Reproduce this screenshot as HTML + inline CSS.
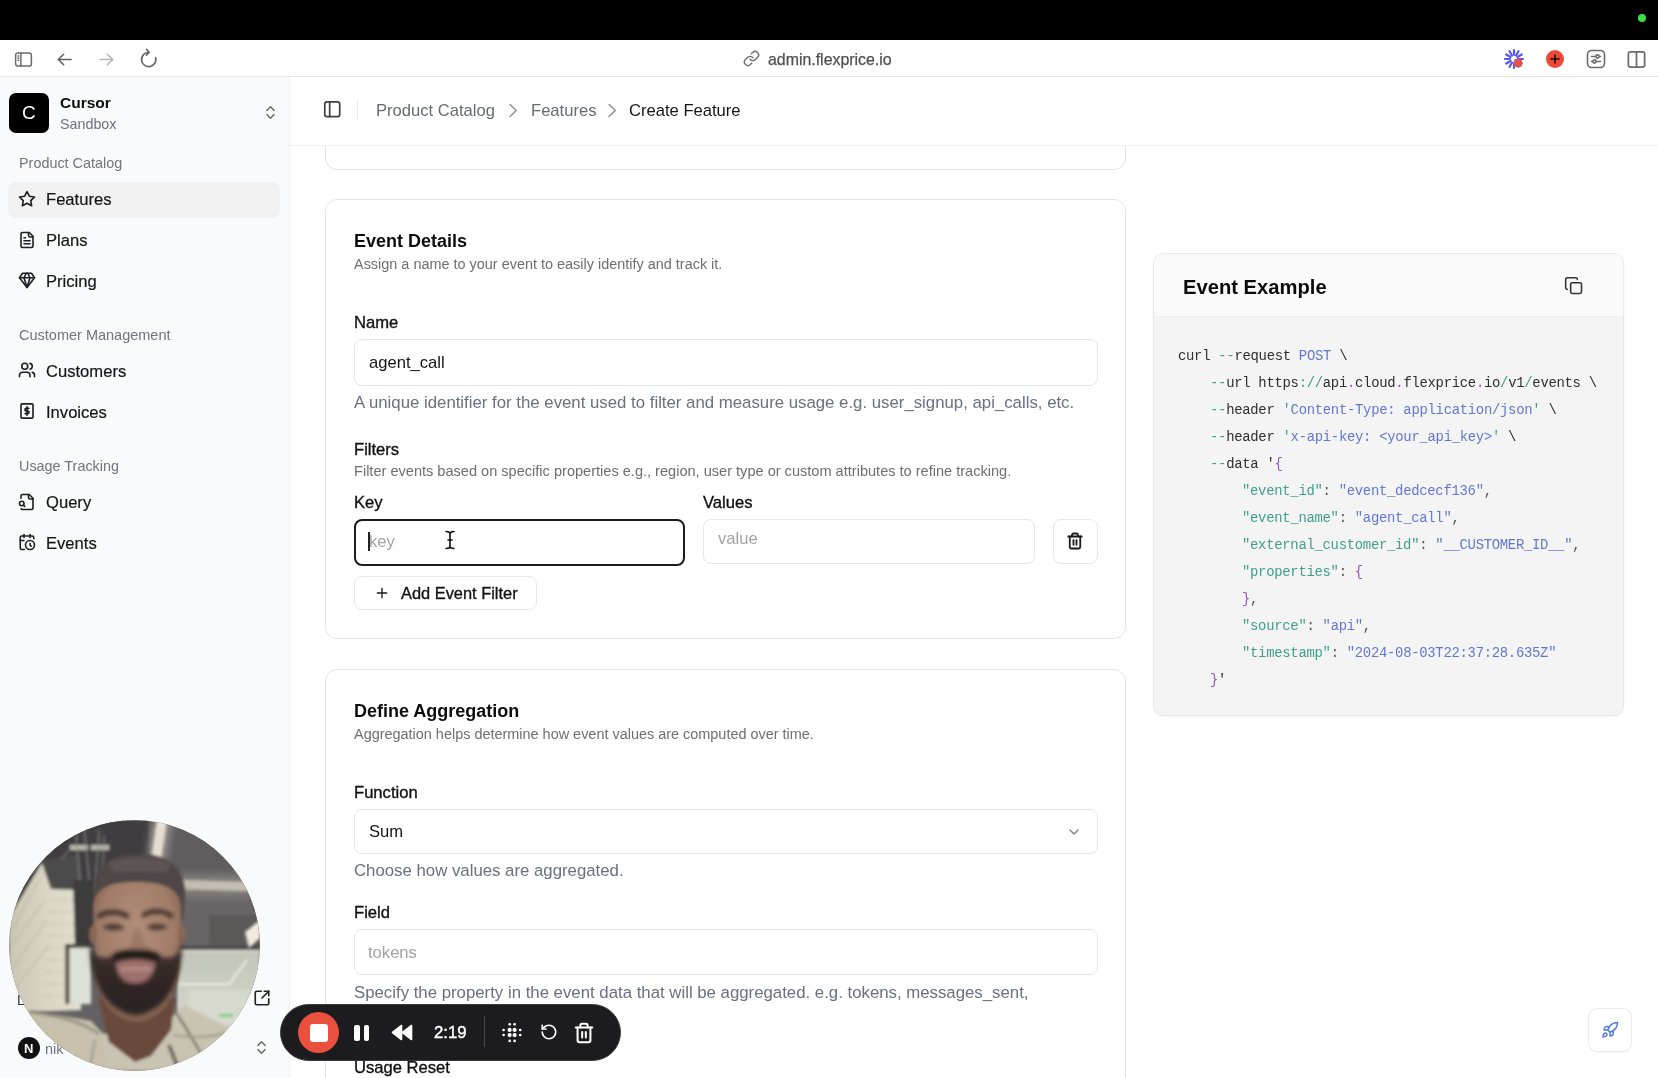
<!DOCTYPE html>
<html><head><meta charset="utf-8">
<style>
*{margin:0;padding:0;box-sizing:border-box}
html,body{width:1658px;height:1078px;overflow:hidden;background:#fff;font-family:"Liberation Sans",sans-serif;color:#111}
.a{position:absolute}
.t{position:absolute;white-space:nowrap;line-height:1;will-change:transform}
svg{position:absolute;overflow:visible}
</style></head><body>
<div class="a" style="left:325px;top:60px;width:801px;height:110px;border:1px solid #e4e4e7;border-radius:12px;background:#fff"></div>
<div class="a" style="left:325px;top:199px;width:801px;height:440px;border:1px solid #e4e4e7;border-radius:12px;background:#fff"></div>
<div class="t" style="left:354.00px;top:231.66px;font-size:18px;color:#0d0d0d;font-weight:700;font-family:'Liberation Sans',sans-serif;">Event Details</div>
<div class="t" style="left:354.00px;top:256.97px;font-size:14.45px;color:#6f6f6f;font-weight:400;font-family:'Liberation Sans',sans-serif;">Assign a name to your event to easily identify and track it.</div>
<div class="t" style="left:354.00px;top:315.05px;font-size:16.6px;color:#111;font-weight:400;font-family:'Liberation Sans',sans-serif;-webkit-text-stroke:0.35px currentColor;">Name</div>
<div class="a" style="left:354px;top:339px;width:744px;height:47px;border:1px solid #e6e7ea;border-radius:8px;background:#fff"></div>
<div class="t" style="left:368.50px;top:355.15px;font-size:16.6px;color:#151515;font-weight:400;font-family:'Liberation Sans',sans-serif;">agent_call</div>
<div class="t" style="left:354.00px;top:394.98px;font-size:16.8px;color:#687081;font-weight:400;font-family:'Liberation Sans',sans-serif;">A unique identifier for the event used to filter and measure usage e.g. user_signup, api_calls, etc.</div>
<div class="t" style="left:354.00px;top:442.15px;font-size:16.6px;color:#111;font-weight:400;font-family:'Liberation Sans',sans-serif;-webkit-text-stroke:0.35px currentColor;">Filters</div>
<div class="t" style="left:354.00px;top:464.17px;font-size:14.57px;color:#6f6f6f;font-weight:400;font-family:'Liberation Sans',sans-serif;">Filter events based on specific properties e.g., region, user type or custom attributes to refine tracking.</div>
<div class="t" style="left:354.00px;top:494.95px;font-size:16.6px;color:#111;font-weight:400;font-family:'Liberation Sans',sans-serif;-webkit-text-stroke:0.35px currentColor;">Key</div>
<div class="t" style="left:703.00px;top:494.95px;font-size:16.6px;color:#111;font-weight:400;font-family:'Liberation Sans',sans-serif;-webkit-text-stroke:0.35px currentColor;">Values</div>
<div class="a" style="left:354px;top:519px;width:331px;height:47px;border:2px solid #1c1c1c;border-radius:8px;background:#fff"></div>
<div class="t" style="left:369.00px;top:533.75px;font-size:16.6px;color:#a3a3a3;font-weight:400;font-family:'Liberation Sans',sans-serif;">key</div>
<div class="a" style="left:368px;top:532px;width:1.5px;height:19px;background:#222"></div>
<div class="a" style="left:703px;top:519px;width:332px;height:45px;border:1px solid #e6e7ea;border-radius:8px;background:#fff"></div>
<div class="t" style="left:718.00px;top:530.95px;font-size:16.6px;color:#a3a3a3;font-weight:400;font-family:'Liberation Sans',sans-serif;">value</div>
<div class="a" style="left:1053px;top:519px;width:45px;height:45px;border:1px solid #e6e7ea;border-radius:8px;background:#fff"></div>
<svg style="left:1066px;top:532px" width="18" height="18" viewBox="0 0 24 24" fill="none" stroke="#1a1a1a" stroke-width="2.4" stroke-linecap="round" stroke-linejoin="round" ><path d="M3 6h18"/><path d="M19 6v14c0 1-1 2-2 2H7c-1 0-2-1-2-2V6"/><path d="M8 6V4c0-1 1-2 2-2h4c1 0 2 1 2 2v2"/><line x1="10" x2="10" y1="11" y2="17"/><line x1="14" x2="14" y1="11" y2="17"/></svg>
<svg style="left:444px;top:530px" width="12" height="20" viewBox="0 0 12 20" fill="none" stroke="#111" stroke-width="1.6" stroke-linecap="round"><path d="M2 1.5c2 0 4 .5 4 2.5v12c0 2 2 2.5 4 2.5M10 1.5c-2 0-4 .5-4 2.5v12c0 2-2 2.5-4 2.5M4 10h4"/></svg>
<div class="a" style="left:354px;top:576px;width:183px;height:34px;border:1px solid #e6e7ea;border-radius:8px;background:#fff"></div>
<svg style="left:374px;top:585px" width="16" height="16" viewBox="0 0 24 24" fill="none" stroke="#1a1a1a" stroke-width="2" stroke-linecap="round" stroke-linejoin="round" ><path d="M5 12h14"/><path d="M12 5v14"/></svg>
<div class="t" style="left:400.60px;top:584.82px;font-size:16.4px;color:#151515;font-weight:400;font-family:'Liberation Sans',sans-serif;-webkit-text-stroke:0.35px currentColor;">Add Event Filter</div>
<div class="a" style="left:325px;top:669px;width:801px;height:480px;border:1px solid #e4e4e7;border-radius:12px;background:#fff"></div>
<div class="t" style="left:354.00px;top:701.66px;font-size:18px;color:#0d0d0d;font-weight:700;font-family:'Liberation Sans',sans-serif;">Define Aggregation</div>
<div class="t" style="left:354.00px;top:726.77px;font-size:14.45px;color:#6f6f6f;font-weight:400;font-family:'Liberation Sans',sans-serif;">Aggregation helps determine how event values are computed over time.</div>
<div class="t" style="left:354.00px;top:785.35px;font-size:16.6px;color:#111;font-weight:400;font-family:'Liberation Sans',sans-serif;-webkit-text-stroke:0.35px currentColor;">Function</div>
<div class="a" style="left:354px;top:809px;width:744px;height:45px;border:1px solid #e6e7ea;border-radius:8px;background:#fff"></div>
<div class="t" style="left:368.80px;top:824.25px;font-size:16.6px;color:#151515;font-weight:400;font-family:'Liberation Sans',sans-serif;">Sum</div>
<svg style="left:1066px;top:823.5px" width="16" height="16" viewBox="0 0 24 24" fill="none" stroke="#858585" stroke-width="2.3" stroke-linecap="round" stroke-linejoin="round" ><path d="m6 9 6 6 6-6"/></svg>
<div class="t" style="left:354.00px;top:862.88px;font-size:16.8px;color:#687081;font-weight:400;font-family:'Liberation Sans',sans-serif;">Choose how values are aggregated.</div>
<div class="t" style="left:354.00px;top:904.65px;font-size:16.6px;color:#111;font-weight:400;font-family:'Liberation Sans',sans-serif;-webkit-text-stroke:0.35px currentColor;">Field</div>
<div class="a" style="left:354px;top:929px;width:744px;height:46px;border:1px solid #e6e7ea;border-radius:8px;background:#fff"></div>
<div class="t" style="left:368.00px;top:944.75px;font-size:16.6px;color:#a3a3a3;font-weight:400;font-family:'Liberation Sans',sans-serif;">tokens</div>
<div class="t" style="left:354.00px;top:984.68px;font-size:16.8px;color:#687081;font-weight:400;font-family:'Liberation Sans',sans-serif;">Specify the property in the event data that will be aggregated. e.g. tokens, messages_sent,</div>
<div class="t" style="left:354.00px;top:1060.15px;font-size:16.6px;color:#111;font-weight:400;font-family:'Liberation Sans',sans-serif;-webkit-text-stroke:0.35px currentColor;">Usage Reset</div>
<div class="a" style="left:1588px;top:1008px;width:44px;height:44px;border:1px solid #ececec;border-radius:9px;background:#fff;box-shadow:0 1px 2px rgba(0,0,0,.04)"></div>
<svg style="left:1601px;top:1021px" width="18" height="18" viewBox="0 0 24 24" fill="none" stroke="#4f7be0" stroke-width="2" stroke-linecap="round" stroke-linejoin="round" ><path d="M4.5 16.5c-1.5 1.26-2 5-2 5s3.74-.5 5-2c.71-.84.7-2.13-.09-2.91a2.18 2.18 0 0 0-2.91-.09z"/><path d="m12 15-3-3a22 22 0 0 1 2-3.95A12.88 12.88 0 0 1 22 2c0 2.72-.78 7.5-6 11a22.35 22.35 0 0 1-4 2z"/><path d="M9 12H4s.55-3.03 2-4c1.62-1.08 5 0 5 0"/><path d="M12 15v5s3.03-.55 4-2c1.08-1.62 0-5 0-5"/></svg>
<div class="a" style="left:0px;top:0px;width:1658px;height:40px;background:#000"></div>
<div class="a" style="left:1638px;top:14px;width:8px;height:8px;border-radius:50%;background:#3fdc4b"></div>
<div class="a" style="left:0px;top:40px;width:1658px;height:37px;background:#fff;border-bottom:1px solid #e6e6e6"></div>
<svg style="left:13px;top:49px" width="21" height="21" viewBox="0 0 24 24" fill="none" stroke="#6b6b6b" stroke-width="1.7" stroke-linecap="round" stroke-linejoin="round" ><rect width="18" height="15" x="3" y="4.5" rx="2.5"/><path d="M9 4.5v15"/><path d="M5.6 8h1M5.6 10.5h1M5.6 13h1"/></svg>
<svg style="left:54px;top:49px" width="21" height="21" viewBox="0 0 24 24" fill="none" stroke="#5f5f5f" stroke-width="1.8" stroke-linecap="round" stroke-linejoin="round" ><path d="m11 18-6-6 6-6"/><path d="M19.5 12H5"/></svg>
<svg style="left:96px;top:49px" width="21" height="21" viewBox="0 0 24 24" fill="none" stroke="#b5b5b5" stroke-width="1.8" stroke-linecap="round" stroke-linejoin="round" ><path d="m13 18 6-6-6-6"/><path d="M4.5 12H19"/></svg>
<svg style="left:138px;top:48px" width="22" height="22" viewBox="0 0 24 24" fill="none" stroke="#6b6b6b" stroke-width="1.9" stroke-linecap="round" stroke-linejoin="round" ><path d="M11.7 4.65A7.85 7.85 0 1 0 19.3 10.5"/><path d="M9.3 1.6L12.2 4.65L9.3 7.7"/></svg>
<svg style="left:742.5px;top:50px" width="17" height="17" viewBox="0 0 24 24" fill="none" stroke="#6e6e6e" stroke-width="2" stroke-linecap="round" stroke-linejoin="round" ><path d="M10 13a5 5 0 0 0 7.54.54l3-3a5 5 0 0 0-7.07-7.07l-1.72 1.71"/><path d="M14 11a5 5 0 0 0-7.54-.54l-3 3a5 5 0 0 0 7.07 7.07l1.71-1.71"/></svg>
<div class="t" style="left:768.00px;top:52.04px;font-size:15.9px;color:#4f4f4f;font-weight:400;font-family:'Liberation Sans',sans-serif;-webkit-text-stroke:0.25px currentColor;">admin.flexprice.io</div>
<svg style="left:1503px;top:48px" width="22" height="22" viewBox="0 0 22 22"><g stroke="#5a56f0" stroke-width="2.2" stroke-linecap="round"><line x1="15.00" y1="11.00" x2="20.00" y2="11.00"/><line x1="14.46" y1="13.00" x2="18.79" y2="15.50"/><line x1="13.00" y1="14.46" x2="15.50" y2="18.79"/><line x1="11.00" y1="15.00" x2="11.00" y2="20.00"/><line x1="9.00" y1="14.46" x2="6.50" y2="18.79"/><line x1="7.54" y1="13.00" x2="3.21" y2="15.50"/><line x1="7.00" y1="11.00" x2="2.00" y2="11.00"/><line x1="7.54" y1="9.00" x2="3.21" y2="6.50"/><line x1="9.00" y1="7.54" x2="6.50" y2="3.21"/><line x1="11.00" y1="7.00" x2="11.00" y2="2.00"/><line x1="13.00" y1="7.54" x2="15.50" y2="3.21"/><line x1="14.46" y1="9.00" x2="18.79" y2="6.50"/></g><rect x="11" y="11" width="8" height="8" rx="2" fill="#e0524a"/></svg>
<div class="a" style="left:1546px;top:50px;width:18px;height:18px;border-radius:50%;background:#ec4a36"></div>
<svg style="left:1548px;top:52px" width="14" height="14" viewBox="0 0 24 24" fill="none" stroke="#111" stroke-width="2.6" stroke-linecap="round" stroke-linejoin="round" ><path d="M12 5v14M5 12h14"/></svg>
<svg style="left:1584px;top:47px" width="24" height="24" viewBox="0 0 24 24" fill="none" stroke="#6b6b6b" stroke-width="1.6" stroke-linecap="round" stroke-linejoin="round" ><rect x="3.5" y="3.5" width="17" height="17" rx="4"/><path d="M7.5 9.5h9M7.5 14.5h9"/><circle cx="13.5" cy="9.5" r="1.6" fill="#fff"/><circle cx="10.5" cy="14.5" r="1.6" fill="#fff"/></svg>
<svg style="left:1625px;top:48px" width="23" height="23" viewBox="0 0 24 24" fill="none" stroke="#6b6b6b" stroke-width="1.8" stroke-linecap="round" stroke-linejoin="round" ><rect x="3.5" y="4" width="17" height="16" rx="2"/><path d="M12 4v16"/></svg>
<div class="a" style="left:0px;top:77px;width:290px;height:1001px;background:#f9fafb;border-right:1px solid #f2f2f3"></div>
<div class="a" style="left:9px;top:93px;width:40px;height:40px;background:#000;border-radius:7px"></div>
<div class="t" style="left:22.40px;top:102.72px;font-size:19px;color:#fff;font-weight:400;font-family:'Liberation Sans',sans-serif;">C</div>
<div class="t" style="left:59.50px;top:95.48px;font-size:15.5px;color:#0c0c0c;font-weight:700;font-family:'Liberation Sans',sans-serif;">Cursor</div>
<div class="t" style="left:59.50px;top:117.30px;font-size:14.3px;color:#6b7280;font-weight:400;font-family:'Liberation Sans',sans-serif;">Sandbox</div>
<svg style="left:262px;top:104px" width="17" height="17" viewBox="0 0 24 24" fill="none" stroke="#6b6b6b" stroke-width="2" stroke-linecap="round" stroke-linejoin="round" ><path d="m7 15 5 5 5-5"/><path d="m7 9 5-5 5 5"/></svg>
<div class="t" style="left:18.60px;top:155.61px;font-size:14.4px;color:#70757e;font-weight:400;font-family:'Liberation Sans',sans-serif;">Product Catalog</div>
<div class="a" style="left:8px;top:182px;width:272px;height:36px;background:#f2f2f3;border-radius:8px"></div>
<svg style="left:17.8px;top:189.70000000000002px" width="18" height="18" viewBox="0 0 24 24" fill="none" stroke="#1f1f1f" stroke-width="2.15" stroke-linecap="round" stroke-linejoin="round" ><polygon points="12 2 15.09 8.26 22 9.27 17 14.14 18.18 21.02 12 17.77 5.82 21.02 7 14.14 2 9.27 8.91 8.26 12 2"/></svg>
<div class="t" style="left:46.00px;top:192.25px;font-size:16.6px;color:#161616;font-weight:400;font-family:'Liberation Sans',sans-serif;-webkit-text-stroke:0.2px currentColor;">Features</div>
<svg style="left:17.8px;top:230.6px" width="18" height="18" viewBox="0 0 24 24" fill="none" stroke="#1f1f1f" stroke-width="2.15" stroke-linecap="round" stroke-linejoin="round" ><path d="M15 2H6a2 2 0 0 0-2 2v16a2 2 0 0 0 2 2h12a2 2 0 0 0 2-2V7Z"/><path d="M14 2v4a2 2 0 0 0 2 2h4"/><path d="M10 9H8"/><path d="M16 13H8"/><path d="M16 17H8"/></svg>
<div class="t" style="left:46.00px;top:233.15px;font-size:16.6px;color:#161616;font-weight:400;font-family:'Liberation Sans',sans-serif;-webkit-text-stroke:0.2px currentColor;">Plans</div>
<svg style="left:17.8px;top:271.4px" width="18" height="18" viewBox="0 0 24 24" fill="none" stroke="#1f1f1f" stroke-width="2.15" stroke-linecap="round" stroke-linejoin="round" ><path d="M6 3h12l4 6-10 13L2 9Z"/><path d="M11 3 8 9l4 13 4-13-3-6"/><path d="M2 9h20"/></svg>
<div class="t" style="left:46.00px;top:273.95px;font-size:16.6px;color:#161616;font-weight:400;font-family:'Liberation Sans',sans-serif;-webkit-text-stroke:0.2px currentColor;">Pricing</div>
<div class="t" style="left:18.60px;top:327.73px;font-size:14.5px;color:#70757e;font-weight:400;font-family:'Liberation Sans',sans-serif;">Customer Management</div>
<svg style="left:17.8px;top:361.29999999999995px" width="18" height="18" viewBox="0 0 24 24" fill="none" stroke="#1f1f1f" stroke-width="2.15" stroke-linecap="round" stroke-linejoin="round" ><path d="M16 21v-2a4 4 0 0 0-4-4H6a4 4 0 0 0-4 4v2"/><circle cx="9" cy="7" r="4"/><path d="M22 21v-2a4 4 0 0 0-3-3.87"/><path d="M16 3.13a4 4 0 0 1 0 7.75"/></svg>
<div class="t" style="left:46.00px;top:363.85px;font-size:16.6px;color:#161616;font-weight:400;font-family:'Liberation Sans',sans-serif;-webkit-text-stroke:0.2px currentColor;">Customers</div>
<svg style="left:17.8px;top:402.2px" width="18" height="18" viewBox="0 0 24 24" fill="none" stroke="#1f1f1f" stroke-width="2.15" stroke-linecap="round" stroke-linejoin="round" ><rect x="4" y="2.5" width="16" height="19" rx="1.5"/><path d="M14.5 8.5h-3.5a1.75 1.75 0 0 0 0 3.5h2a1.75 1.75 0 0 1 0 3.5H9.5"/><path d="M12 6.5v11"/></svg>
<div class="t" style="left:46.00px;top:404.75px;font-size:16.6px;color:#161616;font-weight:400;font-family:'Liberation Sans',sans-serif;-webkit-text-stroke:0.2px currentColor;">Invoices</div>
<div class="t" style="left:18.60px;top:458.81px;font-size:14.4px;color:#70757e;font-weight:400;font-family:'Liberation Sans',sans-serif;">Usage Tracking</div>
<svg style="left:17.8px;top:492.7px" width="18" height="18" viewBox="0 0 24 24" fill="none" stroke="#1f1f1f" stroke-width="2.15" stroke-linecap="round" stroke-linejoin="round" ><path d="M14 2v4a2 2 0 0 0 2 2h4"/><path d="M4.268 21a2 2 0 0 0 1.727 1H18a2 2 0 0 0 2-2V7l-5-5H6a2 2 0 0 0-2 2v3"/><path d="m9 18-1.5-1.5"/><circle cx="5" cy="14" r="3"/></svg>
<div class="t" style="left:46.00px;top:495.25px;font-size:16.6px;color:#161616;font-weight:400;font-family:'Liberation Sans',sans-serif;-webkit-text-stroke:0.2px currentColor;">Query</div>
<svg style="left:17.8px;top:533.1px" width="18" height="18" viewBox="0 0 24 24" fill="none" stroke="#1f1f1f" stroke-width="2.15" stroke-linecap="round" stroke-linejoin="round" ><path d="M21 7.5V6a2 2 0 0 0-2-2H5a2 2 0 0 0-2 2v14a2 2 0 0 0 2 2h3.5"/><path d="M16 2v4"/><path d="M8 2v4"/><path d="M3 10h5"/><path d="M17.5 17.5 16 16.3V14"/><circle cx="16" cy="16" r="6"/></svg>
<div class="t" style="left:46.00px;top:535.65px;font-size:16.6px;color:#161616;font-weight:400;font-family:'Liberation Sans',sans-serif;-webkit-text-stroke:0.2px currentColor;">Events</div>
<div class="t" style="left:17.00px;top:993.35px;font-size:14px;color:#333;font-weight:400;font-family:'Liberation Sans',sans-serif;">L</div>
<div class="a" style="left:18px;top:1037px;width:22px;height:22px;border-radius:50%;background:#111"></div>
<div class="t" style="left:23.50px;top:1042.40px;font-size:13px;color:#fff;font-weight:700;font-family:'Liberation Sans',sans-serif;">N</div>
<div class="t" style="left:45.00px;top:1041.93px;font-size:14.5px;color:#6b7280;font-weight:400;font-family:'Liberation Sans',sans-serif;">nik</div>
<svg style="left:253px;top:1039px" width="17" height="17" viewBox="0 0 24 24" fill="none" stroke="#6b6b6b" stroke-width="2" stroke-linecap="round" stroke-linejoin="round" ><path d="m7 15 5 5 5-5"/><path d="m7 9 5-5 5 5"/></svg>
<div class="a" style="left:290px;top:77px;width:1368px;height:69px;background:#fff;border-bottom:1px solid #f0f0f0"></div>
<svg style="left:321.7px;top:99.2px" width="20.5" height="20.5" viewBox="0 0 24 24" fill="none" stroke="#404040" stroke-width="2" stroke-linecap="round" stroke-linejoin="round" ><rect width="17.5" height="17.5" x="3.25" y="3.25" rx="2.5"/><path d="M9 3.25v17.5"/></svg>
<div class="a" style="left:357px;top:99px;width:1px;height:22px;background:#ececec"></div>
<div class="t" style="left:376.00px;top:103.15px;font-size:16.6px;color:#666b73;font-weight:400;font-family:'Liberation Sans',sans-serif;">Product Catalog</div>
<svg style="left:508px;top:103px" width="10" height="15" viewBox="0 0 10 15"><path d="M2 1.6L8.3 7.6L2 13.6" fill="none" stroke="#8c8c8c" stroke-width="1.35" stroke-linecap="round" stroke-linejoin="round"/></svg>
<div class="t" style="left:530.50px;top:103.15px;font-size:16.6px;color:#666b73;font-weight:400;font-family:'Liberation Sans',sans-serif;">Features</div>
<svg style="left:607px;top:103px" width="10" height="15" viewBox="0 0 10 15"><path d="M2 1.6L8.3 7.6L2 13.6" fill="none" stroke="#8c8c8c" stroke-width="1.35" stroke-linecap="round" stroke-linejoin="round"/></svg>
<div class="t" style="left:629.00px;top:103.15px;font-size:16.6px;color:#151515;font-weight:400;font-family:'Liberation Sans',sans-serif;">Create Feature</div>
<div class="a" style="left:1153px;top:253px;width:471px;height:463px;border:1px solid #e9e9e9;border-radius:10px;background:#f4f4f5;box-shadow:0 1px 3px rgba(0,0,0,.04)"></div>
<div class="a" style="left:1154px;top:254px;width:469px;height:63px;background:#fafafa;border-radius:9px 9px 0 0;border-bottom:1px solid #efefef"></div>
<div class="t" style="left:1182.50px;top:276.60px;font-size:20.2px;color:#0b0b0b;font-weight:700;font-family:'Liberation Sans',sans-serif;">Event Example</div>
<svg style="left:1563.5px;top:276px" width="20" height="20" viewBox="0 0 24 24" fill="none" stroke="#333" stroke-width="1.9" stroke-linecap="round" stroke-linejoin="round" ><rect width="13" height="13" x="8" y="8" rx="2" ry="2"/><path d="M4 16c-1.1 0-2-.9-2-2V4c0-1.1.9-2 2-2h10c1.1 0 2 .9 2 2"/></svg>
<div class="t" style="left:1178.00px;top:349.75px;font-size:13.9px;color:#2f2f2f;font-weight:400;font-family:'Liberation Mono',monospace;letter-spacing:-0.280px;"><span style="color:#2f2f2f">curl </span><span style="color:#3f9f8a">--</span><span style="color:#2f2f2f">request </span><span style="color:#6278cf">POST</span><span style="color:#2f2f2f"> \</span></div>
<div class="t" style="left:1210.24px;top:376.80px;font-size:13.9px;color:#2f2f2f;font-weight:400;font-family:'Liberation Mono',monospace;letter-spacing:-0.280px;"><span style="color:#3f9f8a">--</span><span style="color:#2f2f2f">url https</span><span style="color:#3f9f8a">://</span><span style="color:#2f2f2f">api</span><span style="color:#9b52c8">.</span><span style="color:#2f2f2f">cloud</span><span style="color:#9b52c8">.</span><span style="color:#2f2f2f">flexprice</span><span style="color:#9b52c8">.</span><span style="color:#2f2f2f">io</span><span style="color:#3f9f8a">/</span><span style="color:#2f2f2f">v1</span><span style="color:#3f9f8a">/</span><span style="color:#2f2f2f">events \</span></div>
<div class="t" style="left:1210.24px;top:403.85px;font-size:13.9px;color:#2f2f2f;font-weight:400;font-family:'Liberation Mono',monospace;letter-spacing:-0.280px;"><span style="color:#3f9f8a">--</span><span style="color:#2f2f2f">header </span><span style="color:#3f9f8a">'</span><span style="color:#6278cf">Content-Type: application/json</span><span style="color:#3f9f8a">'</span><span style="color:#2f2f2f"> \</span></div>
<div class="t" style="left:1210.24px;top:430.90px;font-size:13.9px;color:#2f2f2f;font-weight:400;font-family:'Liberation Mono',monospace;letter-spacing:-0.280px;"><span style="color:#3f9f8a">--</span><span style="color:#2f2f2f">header </span><span style="color:#3f9f8a">'</span><span style="color:#6278cf">x-api-key: &lt;your_api_key&gt;</span><span style="color:#3f9f8a">'</span><span style="color:#2f2f2f"> \</span></div>
<div class="t" style="left:1210.24px;top:457.95px;font-size:13.9px;color:#2f2f2f;font-weight:400;font-family:'Liberation Mono',monospace;letter-spacing:-0.280px;"><span style="color:#3f9f8a">--</span><span style="color:#2f2f2f">data '</span><span style="color:#9b52c8">{</span></div>
<div class="t" style="left:1242.48px;top:485.00px;font-size:13.9px;color:#2f2f2f;font-weight:400;font-family:'Liberation Mono',monospace;letter-spacing:-0.280px;"><span style="color:#3f9f8a">"event_id"</span><span style="color:#555">: </span><span style="color:#6278cf">"event_dedcecf136"</span><span style="color:#555">,</span></div>
<div class="t" style="left:1242.48px;top:512.05px;font-size:13.9px;color:#2f2f2f;font-weight:400;font-family:'Liberation Mono',monospace;letter-spacing:-0.280px;"><span style="color:#3f9f8a">"event_name"</span><span style="color:#555">: </span><span style="color:#6278cf">"agent_call"</span><span style="color:#555">,</span></div>
<div class="t" style="left:1242.48px;top:539.10px;font-size:13.9px;color:#2f2f2f;font-weight:400;font-family:'Liberation Mono',monospace;letter-spacing:-0.280px;"><span style="color:#3f9f8a">"external_customer_id"</span><span style="color:#555">: </span><span style="color:#6278cf">"__CUSTOMER_ID__"</span><span style="color:#555">,</span></div>
<div class="t" style="left:1242.48px;top:566.15px;font-size:13.9px;color:#2f2f2f;font-weight:400;font-family:'Liberation Mono',monospace;letter-spacing:-0.280px;"><span style="color:#3f9f8a">"properties"</span><span style="color:#555">: </span><span style="color:#9b52c8">{</span></div>
<div class="t" style="left:1242.48px;top:593.20px;font-size:13.9px;color:#2f2f2f;font-weight:400;font-family:'Liberation Mono',monospace;letter-spacing:-0.280px;"><span style="color:#9b52c8">}</span><span style="color:#555">,</span></div>
<div class="t" style="left:1242.48px;top:620.25px;font-size:13.9px;color:#2f2f2f;font-weight:400;font-family:'Liberation Mono',monospace;letter-spacing:-0.280px;"><span style="color:#3f9f8a">"source"</span><span style="color:#555">: </span><span style="color:#6278cf">"api"</span><span style="color:#555">,</span></div>
<div class="t" style="left:1242.48px;top:647.30px;font-size:13.9px;color:#2f2f2f;font-weight:400;font-family:'Liberation Mono',monospace;letter-spacing:-0.280px;"><span style="color:#3f9f8a">"timestamp"</span><span style="color:#555">: </span><span style="color:#6278cf">"2024-08-03T22:37:28.635Z"</span></div>
<div class="t" style="left:1210.24px;top:674.35px;font-size:13.9px;color:#2f2f2f;font-weight:400;font-family:'Liberation Mono',monospace;letter-spacing:-0.280px;"><span style="color:#9b52c8">}</span><span style="color:#2f2f2f">'</span></div>
<svg style="left:9px;top:820px" width="251" height="251" viewBox="0 0 251 251">
<defs>
<clipPath id="cc"><circle cx="125.5" cy="125.5" r="125.3"/></clipPath>
<filter id="b1" x="-30%" y="-30%" width="160%" height="160%"><feGaussianBlur stdDeviation="1.4"/></filter>
<filter id="b2s" x="-30%" y="-30%" width="160%" height="160%"><feGaussianBlur stdDeviation="1.9"/></filter>
<filter id="b2" x="-30%" y="-30%" width="160%" height="160%"><feGaussianBlur stdDeviation="3"/></filter>
<filter id="b3" x="-30%" y="-30%" width="160%" height="160%"><feGaussianBlur stdDeviation="5"/></filter>
<linearGradient id="ceil" x1="0" y1="0" x2="1" y2="1"><stop offset="0" stop-color="#4a4949"/><stop offset="0.5" stop-color="#666263"/><stop offset="1" stop-color="#5a5657"/></linearGradient>
<linearGradient id="wall" x1="0" y1="0" x2="1" y2="0"><stop offset="0" stop-color="#cbc6b4"/><stop offset="0.6" stop-color="#dcd7c6"/><stop offset="1" stop-color="#e3dfd0"/></linearGradient>
<radialGradient id="skin" cx="0.5" cy="0.35" r="0.6"><stop offset="0" stop-color="#b28f7b"/><stop offset="0.7" stop-color="#a07c69"/><stop offset="1" stop-color="#80604f"/></radialGradient>
<linearGradient id="brd" x1="0" y1="0" x2="0" y2="1"><stop offset="0" stop-color="#2f2624" stop-opacity="0.55"/><stop offset="0.35" stop-color="#2f2624" stop-opacity="0.95"/><stop offset="1" stop-color="#2a2220"/></linearGradient>
<linearGradient id="glass" x1="0" y1="0" x2="0" y2="1"><stop offset="0" stop-color="#bfc2b7"/><stop offset="1" stop-color="#d9dbd0"/></linearGradient>
</defs>
<g clip-path="url(#cc)">
<rect width="251" height="251" fill="url(#ceil)"/>
<g filter="url(#b1)">
<!-- dark ceiling left -->
<path d="M0 0 H140 V120 H60 L40 60 L0 90Z" fill="#3f3e3f"/>
<path d="M30 40 L70 35 L75 75 L45 70Z" fill="#4c4b4c"/>
<!-- right ceiling -->
<path d="M150 0 H251 V130 H165 Z" fill="#615d5e"/>
<path d="M170 75 H251 V130 H170Z" fill="#696566"/>
<path d="M200 95 H251 V130 H200Z" fill="#5c5859"/>
<!-- ceiling wires & fixtures -->
<rect x="61" y="25" width="18" height="5" fill="#b9b8aa"/>
<rect x="82" y="25" width="18" height="5" fill="#b9b8aa"/>
<path d="M67 12 L72 80 M75 8 L82 78 M90 10 L86 75 M95 15 L93 70 M60 30 L52 40" stroke="#8a8a86" stroke-width="1" fill="none"/>
<!-- left white brick wall -->
<path d="M0 98 L33 43 L42 69 L70 70 L72 190 L20 192 L0 200Z" fill="url(#wall)"/>
<path d="M3 110 L30 60 M0 130 L36 80 M2 150 L38 100 M5 170 L40 125" stroke="#bdb8a6" stroke-width="1.2" fill="none"/>
<path d="M42 80 H68 M40 92 H66 M40 104 H68 M38 116 H66 M38 128 H68 M36 140 H66 M36 152 H68 M34 164 H66 M34 176 H68" stroke="#c5c0ae" stroke-width="1" fill="none"/>
<!-- dark column between wall and face -->
<path d="M64 60 L86 60 L86 128 L66 128 Z" fill="#3c3a3a"/>
<!-- left glass window -->
<rect x="56" y="126" width="26" height="58" fill="#dde0d6"/>
<rect x="56" y="126" width="4.5" height="58" fill="#56534f"/>
<rect x="56" y="124" width="26" height="4" fill="#4a4845"/>
<!-- right glass room -->
<rect x="168" y="126" width="83" height="85" fill="url(#glass)"/>
<rect x="168" y="126" width="83" height="4" fill="#4c4a49"/>
<rect x="168" y="130" width="83" height="3" fill="#d3d1c8"/>
<rect x="168" y="137" width="83" height="3" fill="#c8c7bd"/>
<path d="M168 164 H220 L238 140" stroke="#eeeee6" stroke-width="2" fill="none"/>
<rect x="180" y="170" width="60" height="40" fill="#d7d9ce"/>
<rect x="210" y="194" width="14" height="3" fill="#6fd27a"/>
</g>
<!-- light strips (sharper) -->
<g filter="url(#b1)">
<path d="M148 0 L158 0 L151 44 L142 43Z" fill="#f6f2e4"/>
<path d="M167 60 L238 62 L238 71 L167 69Z" fill="#f2eee2"/>
<path d="M236 112 L251 100 L251 118 L240 128Z" fill="#efebe0"/>
</g>
<g filter="url(#b3)" opacity="0.6">
<path d="M145 0 L162 0 L154 48 L138 46Z" fill="#d8d0c4"/>
<path d="M165 55 H245 V76 H165Z" fill="#a49c94"/>
</g>
<g filter="url(#b1)">
<!-- shirt -->
<path d="M19 190 L82 201 L93 213 L126 221 L160 200 L175 185 L215 205 L251 215 V251 H0 V200Z" fill="#c9c3b1"/>
<path d="M19 190 L82 201 L93 213 L98 251 H0 V205Z" fill="#c6c0ad"/>
<path d="M20 192 C50 196 70 200 90 214" stroke="#8f8a7b" stroke-width="2.5" fill="none"/>
<path d="M86 220 L80 251" stroke="#9a9586" stroke-width="2" fill="none"/>
<path d="M160 182 L175 205 L190 230 L200 251" stroke="#7d776a" stroke-width="2.5" fill="none"/>
<path d="M165 215 C190 220 210 215 230 210" stroke="#9c9787" stroke-width="2" fill="none"/>
<path d="M160 225 L170 251" stroke="#6e695e" stroke-width="4" fill="none"/>
<!-- neck -->
<path d="M89 178 L166 178 L162 210 L142 236 L126 242 L100 222 Z" fill="#6a4a3e"/>
<!-- head: hair -->
<path d="M84 80 C84 45 102 34 130 34 C160 34 178 48 176 80 L174 100 L86 100 Z" fill="#4f4746"/>
<path d="M100 42 C115 36 148 36 162 44 L158 52 L104 52Z" fill="#5f5856" opacity="0.8"/>
<!-- face -->
<path d="M84 90 C84 68 100 62 128 62 C158 62 173 70 172 92 L170 150 C168 180 150 200 128 202 C104 200 88 180 86 150 Z" fill="url(#skin)"/>
<!-- ears -->
<ellipse cx="84" cy="115" rx="4" ry="10" fill="#8a6756"/>
<ellipse cx="173" cy="115" rx="4" ry="10" fill="#8a6756"/>
</g>
<g filter="url(#b2s)">
<!-- eyebrows -->
<path d="M90 96 C98 91 110 91 118 96" stroke="#3b2d28" stroke-width="4.5" fill="none" stroke-linecap="round"/>
<path d="M135 95 C143 90 155 90 162 96" stroke="#3b2d28" stroke-width="4.5" fill="none" stroke-linecap="round"/>
<!-- eyes -->
<path d="M93 107 C100 103 110 103 116 108 C108 111 100 111 93 107Z" fill="#4a362e"/>
<path d="M137 107 C143 103 153 103 159 107 C152 111 144 111 137 107Z" fill="#4a362e"/>
<!-- nose -->
<path d="M126 108 L119 130 C123 135 134 135 138 130 L131 108Z" fill="#94705f" opacity="0.7"/>
<path d="M117 129 C122 135 134 135 140 129" stroke="#6d4e42" stroke-width="2.5" fill="none"/>
<!-- beard -->
<path d="M80 118 C80 165 100 192 127 195 C154 192 174 165 174 118 C170 138 162 140 152 136 C140 131 114 131 102 136 C92 140 84 138 80 118Z" fill="url(#brd)"/>
<path d="M104 134 C115 128 140 128 150 134 L149 142 C140 138 116 138 106 142Z" fill="#221a18"/>
<!-- lips -->
<path d="M107 143 C116 139 137 139 146 143 C144 158 136 163 126 163 C116 163 109 158 107 143Z" fill="#9f6f6c"/>
<path d="M111 150 C120 148 134 148 142 150" stroke="#c9a49d" stroke-width="2" fill="none"/>
</g>
</g>
</svg>
<div class="a" style="left:280px;top:1004px;width:341px;height:57px;background:#1c1c1e;border-radius:29px;border:1px solid #3a3a3c"></div>
<div class="a" style="left:298px;top:1012px;width:41px;height:41px;background:#e9503d;border-radius:50%"></div>
<div class="a" style="left:309.5px;top:1023.5px;width:18.5px;height:18px;background:#fff;border-radius:3px"></div>
<div class="a" style="left:354px;top:1024.5px;width:5.5px;height:16px;background:#fff;border-radius:2px"></div>
<div class="a" style="left:363.5px;top:1024.5px;width:5.5px;height:16px;background:#fff;border-radius:2px"></div>
<svg style="left:391px;top:1024px" width="22" height="17" viewBox="0 0 22 17"><path d="M10.5 1.5v14L1.5 8.5z M20.5 1.5v14L11.5 8.5z" fill="#fff" stroke="#fff" stroke-width="1.6" stroke-linejoin="round"/></svg>
<div class="t" style="left:434.00px;top:1024.98px;font-size:16.8px;color:#fff;font-weight:400;font-family:'Liberation Sans',sans-serif;-webkit-text-stroke:0.4px #fff;">2:19</div>
<div class="a" style="left:484px;top:1016px;width:1px;height:31px;background:#48484a"></div>
<svg style="left:495px;top:1012px" width="40" height="40" viewBox="0 0 40 40"><circle cx="14.600000000000023" cy="17.90000000000009" r="2.1" fill="#fff"/><circle cx="19.600000000000023" cy="17.90000000000009" r="2.1" fill="#fff"/><circle cx="14.600000000000023" cy="23.09999999999991" r="2.1" fill="#fff"/><circle cx="19.600000000000023" cy="23.09999999999991" r="2.1" fill="#fff"/><circle cx="14.699999999999989" cy="12.299999999999955" r="1.35" fill="#fff"/><circle cx="19.600000000000023" cy="12.299999999999955" r="1.35" fill="#fff"/><circle cx="14.699999999999989" cy="28.90000000000009" r="1.35" fill="#fff"/><circle cx="19.600000000000023" cy="28.90000000000009" r="1.35" fill="#fff"/><circle cx="8.600000000000023" cy="18" r="1.35" fill="#fff"/><circle cx="8.600000000000023" cy="23" r="1.35" fill="#fff"/><circle cx="25.200000000000045" cy="18" r="1.35" fill="#fff"/><circle cx="25.200000000000045" cy="23" r="1.35" fill="#fff"/></svg>
<svg style="left:539.5px;top:1023px" width="18" height="18" viewBox="0 0 24 24" fill="none" stroke="#fff" stroke-width="2.2" stroke-linecap="round" stroke-linejoin="round" ><path d="M3 12a9 9 0 1 0 9-9 9.75 9.75 0 0 0-6.74 2.74L3 8"/><path d="M3 3v5h5"/></svg>
<svg style="left:573px;top:1022px" width="22" height="22" viewBox="0 0 24 24" fill="none" stroke="#fff" stroke-width="2.2" stroke-linecap="round" stroke-linejoin="round" ><path d="M3 6h18"/><path d="M19 6v14c0 1-1 2-2 2H7c-1 0-2-1-2-2V6"/><path d="M8 6V4c0-1 1-2 2-2h4c1 0 2 1 2 2v2"/><line x1="10" x2="10" y1="11" y2="17"/><line x1="14" x2="14" y1="11" y2="17"/></svg>
<svg style="left:252.8px;top:989.3px" width="18" height="18" viewBox="0 0 24 24" fill="none" stroke="#222" stroke-width="2.2" stroke-linecap="round" stroke-linejoin="round" ><path d="M21 13v6a2 2 0 0 1-2 2H5a2 2 0 0 1-2-2V5a2 2 0 0 1 2-2h6"/><path d="m21 3-9 9"/><path d="M15 3h6v6"/></svg>
</body></html>
